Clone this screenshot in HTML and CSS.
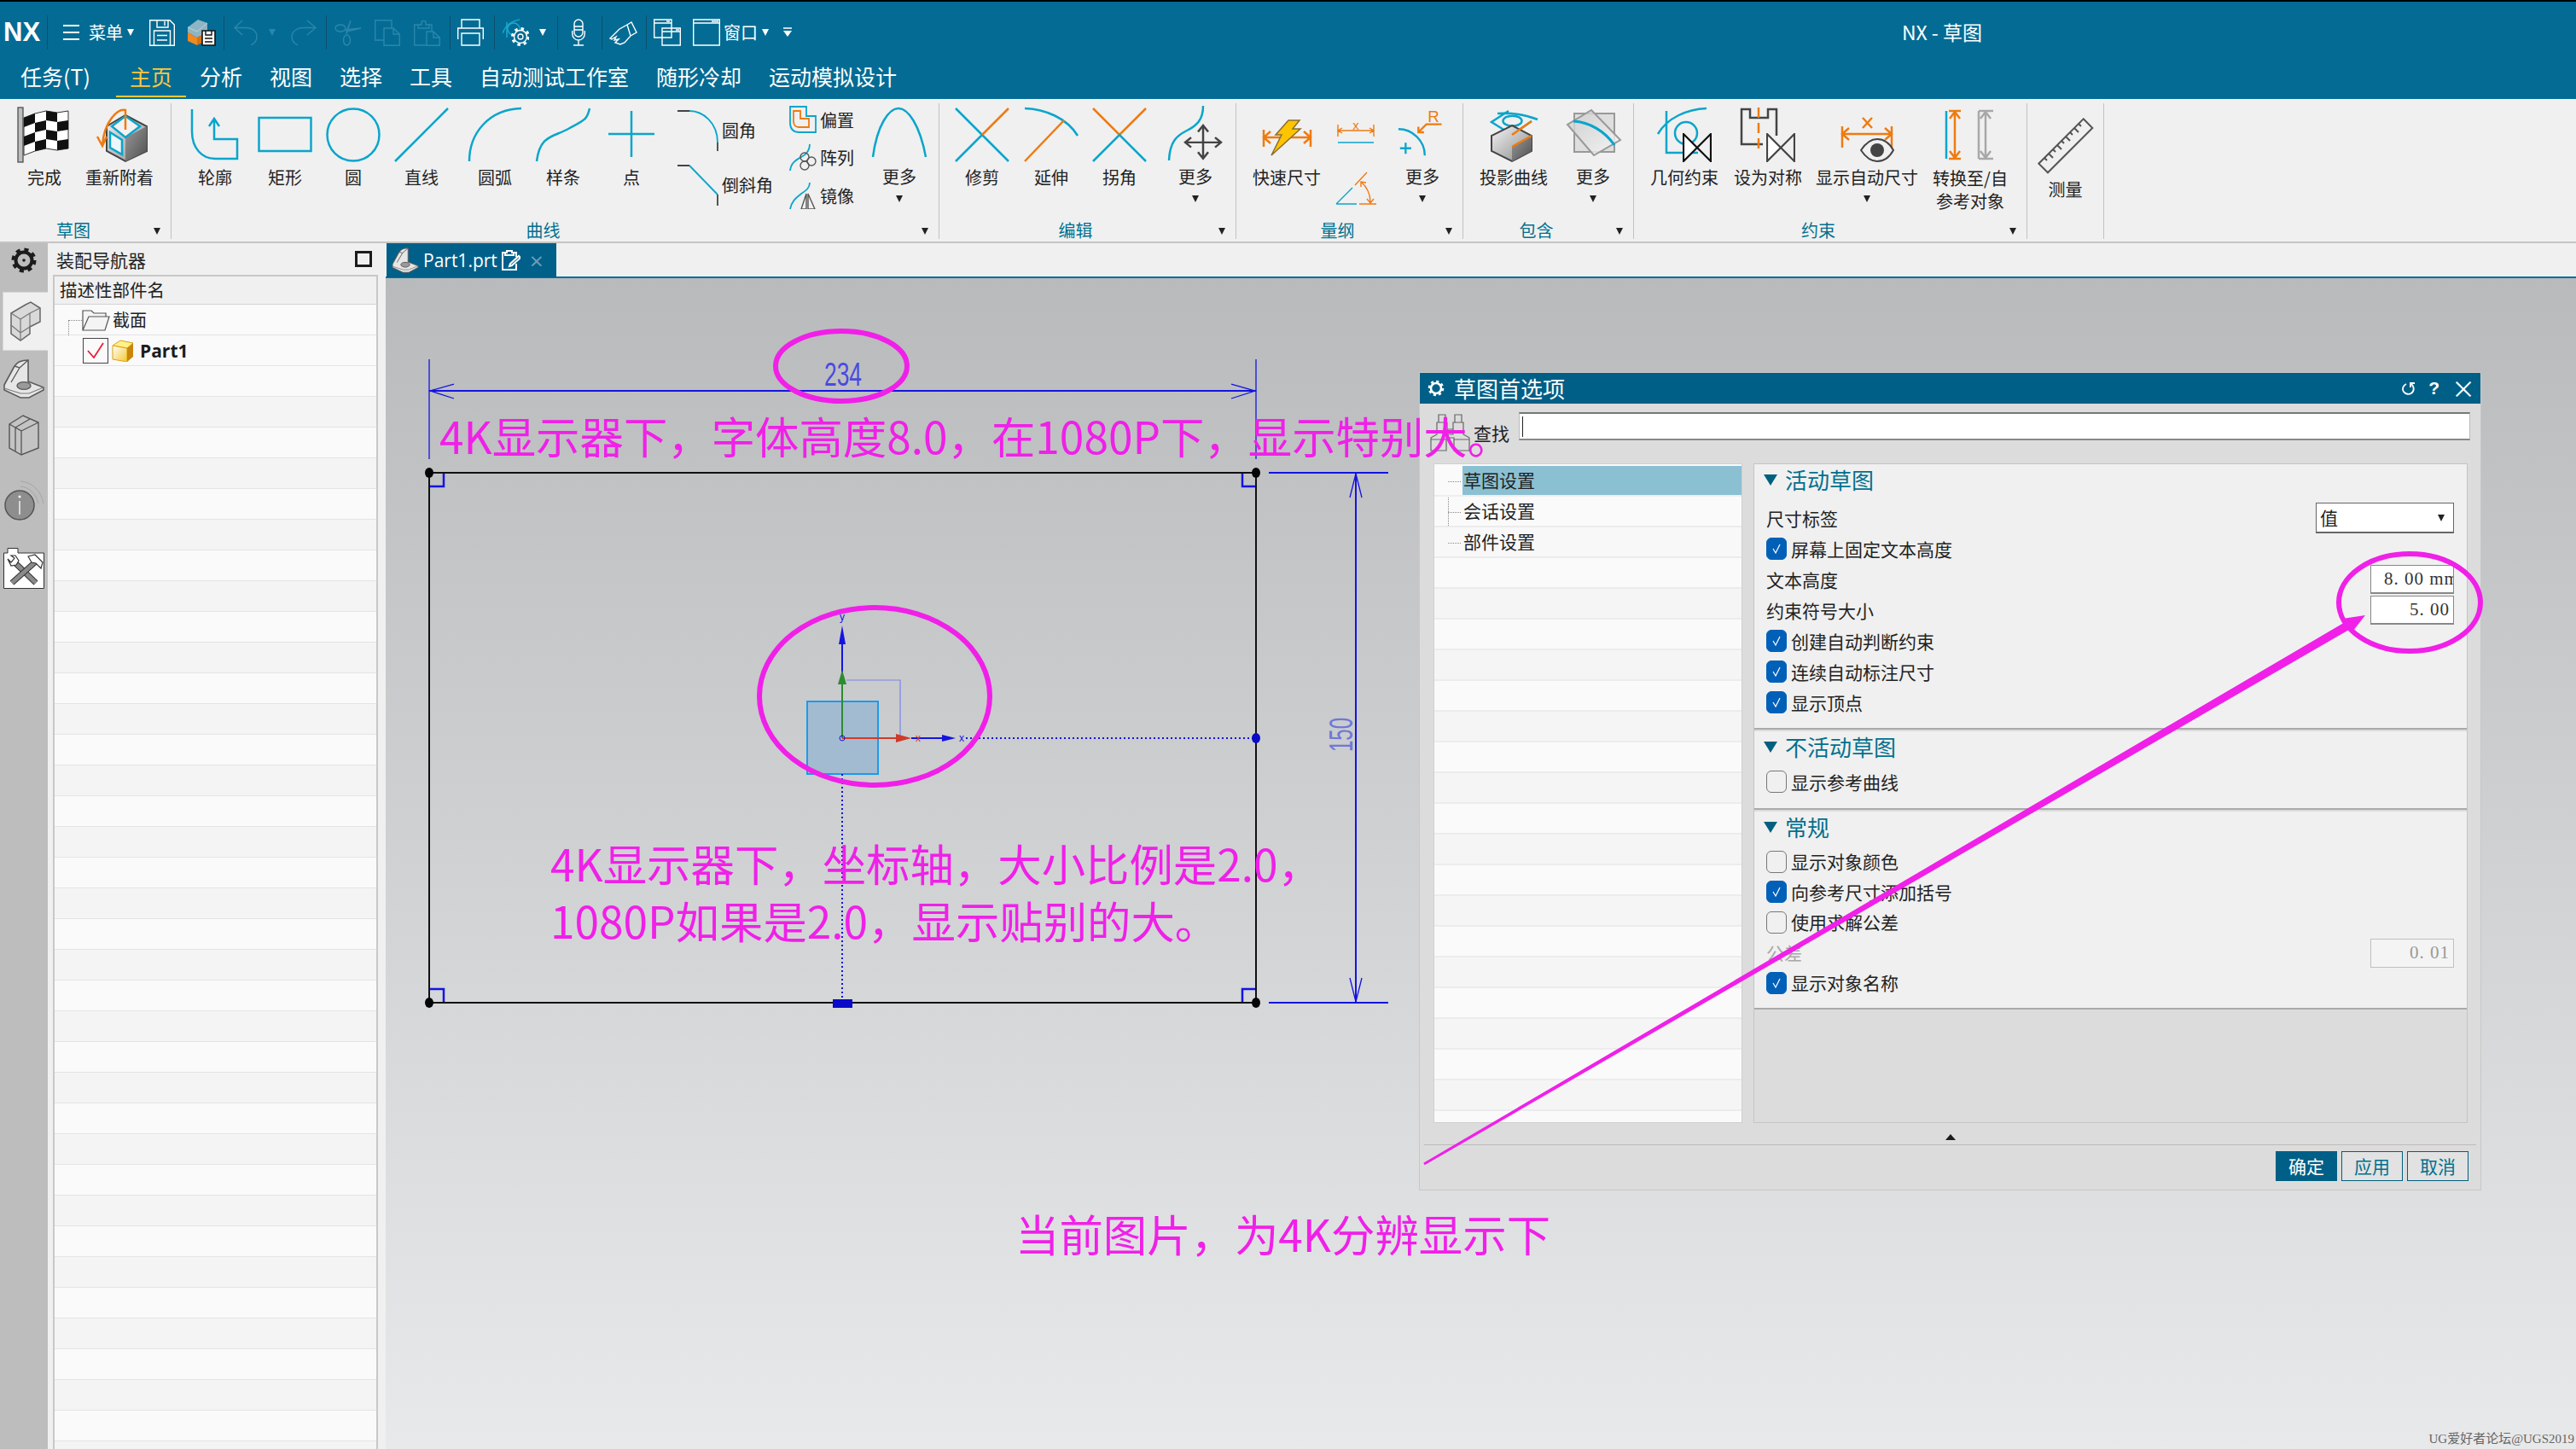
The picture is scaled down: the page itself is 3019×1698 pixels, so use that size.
FILE: index.html
```html
<!DOCTYPE html>
<html lang="zh">
<head>
<meta charset="utf-8">
<title>NX - 草图</title>
<link rel="stylesheet" href="styles.css">
</head>
<body>
<svg class="defs" width="0" height="0">
  <defs>
    <linearGradient id="gCube" x1="0" y1="0" x2="1" y2="1"><stop offset="0" stop-color="#f4f4f4"/><stop offset="1" stop-color="#8a8a8a"/></linearGradient>
    <linearGradient id="gIn" x1="0" y1="0" x2="1" y2="1"><stop offset="0" stop-color="#9a9a9a"/><stop offset="1" stop-color="#4f4f4f"/></linearGradient>
    <linearGradient id="gSurf" x1="0" y1="0" x2="1" y2="1"><stop offset="0" stop-color="#c9c9c9"/><stop offset="1" stop-color="#fafafa"/></linearGradient>
    <symbol id="part" viewBox="0 0 48 46">
      <path d="M1 30L13 8C16 3 23 1 29 1V26L47 33V36L30 45H20L1 36Z" fill="#e6e6e6" stroke="#5c5c5c" stroke-width="1.6"/>
      <path d="M13 8L19 10L29 1M19 10L9 27" fill="none" stroke="#5c5c5c" stroke-width="1.4"/>
      <ellipse cx="24" cy="31" rx="8" ry="4.4" fill="#9a9a9a" stroke="#5c5c5c" stroke-width="1.4"/>
      <path d="M1 34L20 40H30L47 33" fill="none" stroke="#7c7c7c" stroke-width="1.2"/>
    </symbol>
    <symbol id="bowtie" viewBox="0 0 34 34">
      <path d="M1 1L17 17L1 33Z" fill="#fff"/>
      <path d="M1 1V33L33 1V33Z" fill="none" stroke="currentColor" stroke-width="2.2"/>
    </symbol>
  </defs>
</svg>

<div class="app">
  <header class="top">
    <div class="qa">
      <span class="nx">NX</span>
      <i class="qsep"></i>
      <svg class="ml18" width="19" height="20" viewBox="0 0 19 20"><path d="M0 2H19M0 10H19M0 18H19" stroke="#fff" stroke-width="2"/></svg>
      <span class="qtext ml11">菜单</span>
      <i class="wcaret ml5"></i>
      <svg class="qi ml18" width="30" height="31" viewBox="0 0 30 31"><path d="M.7.7H24L29.3 6V30.3H.7Z"/><path d="M9 .7V9H22V.7M18 2V7M5.5 30V13H24.5V30M9 18.5H21M9 24H21"/></svg>
      <svg class="ml15" width="33" height="32" viewBox="0 0 33 32"><path d="M0 10L12 1L23 5V16L11 22L0 16Z" fill="#8fb5c4"/><path d="M0 16L11 22V31L0 26Z" fill="#ee8a1f"/><path d="M11 22L23 16V25L11 31Z" fill="#d9720e"/><path d="M0 10L11 15L23 5" fill="none" stroke="#b9d3dd"/><path d="M17 14H32V31H17Z" fill="#fff" stroke="#111" stroke-width="1.6"/><path d="M21 14V19H28V14M20 23H29M20 27H29" fill="none" stroke="#111" stroke-width="1.4"/></svg>
      <i class="qsep ml9"></i>
      <svg class="qo ml11" width="28" height="30" viewBox="0 0 28 30"><path d="M10 1L1 9.5L10 18M1 9.5H14C22 9.5 27 14 27 20C27 25 24 28 20 30"/></svg>
      <i class="dcaret ml13"></i>
      <svg class="qo ml18" width="30" height="30" viewBox="0 0 30 30"><path d="M19 1L29 9.5L19 18M29 9.5H15C7 9.5 1 14 1 20C1 25 4 28 8 30"/></svg>
      <i class="qsep ml11"></i>
      <svg class="qo ml9" width="32" height="31" viewBox="0 0 32 31"><ellipse cx="7" cy="10" rx="6" ry="4"/><ellipse cx="14.500" cy="24" rx="4" ry="6"/><path d="M12 12L31 10L14 14L19 1L14 17"/></svg>
      <svg class="qo ml15" width="30" height="31" viewBox="0 0 30 31"><path d="M11 24H.7V.7H20V10M11 10H22L29.300 17V30.300H11Z M22 10V17H29"/></svg>
      <svg class="qo ml16" width="31" height="31" viewBox="0 0 31 31"><path d="M15 30H.7V6H9V3C9 1 14 1 14 3V6H21V14M5 6V10H18V6M15 14H23L30.300 21V30.300H15Z M23 14V21H30"/></svg>
      <i class="qsep ml11"></i>
      <svg class="qi ml8" width="31" height="32" viewBox="0 0 31 32"><path d="M5 11V1H26V11M.7 24V11H30.300V24M5 17H26V31H5Z"/></svg>
      <i class="qsep ml12"></i>
      <svg class="ml9" width="31" height="32" viewBox="0 0 31 32"><path d="M0 17C3 8 9 3 20 1" fill="none" stroke="#19a9d2" stroke-width="1.500"/><path d="M5 4V22" fill="none" stroke="#19a9d2" stroke-width="1.500"/><circle cx="13" cy="12" r="7" fill="none" stroke="#19a9d2" stroke-width="1.500"/><circle cx="21" cy="21" r="7.500" fill="#046c94" stroke="#fff" stroke-width="1.400"/><circle cx="21" cy="21" r="9.500" fill="none" stroke="#fff" stroke-width="3" stroke-dasharray="3.500 4"/><circle cx="21" cy="21" r="3" fill="none" stroke="#fff" stroke-width="1.300"/></svg>
      <i class="wcaret ml12"></i>
      <i class="qsep ml13"></i>
      <svg class="qi ml16" width="16" height="32" viewBox="0 0 16 32"><rect x="3" y="1" width="10" height="20" rx="5"/><path d="M3 9H13M3 13H13M.7 14V17C.7 22 4 25 8 25C12 25 15.300 22 15.300 17V14M8 25V31M2 31H14"/></svg>
      <i class="qsep ml19"></i>
      <svg class="qi ml8" width="33" height="30" viewBox="0 0 33 30"><path d="M1 22L12 11L21 6L26 3L32 15L25 19L18 27L13 29L7 27L11 23L6 24L8 20L3 23ZM26 3L21 6L25 19"/></svg>
      <i class="qsep ml10"></i>
      <svg class="qi ml8" width="32" height="32" viewBox="0 0 32 32"><path d="M.7 1H21V22H.7ZM.7 5H21M10 11H31.300V31H10ZM10 15H31.300M15 3H19M26 13H30"/></svg>
      <svg class="qi ml14" width="32" height="32" viewBox="0 0 32 32"><path d="M.7 1H31.300V31H.7ZM.7 5H31.300M22 3H30"/></svg>
      <span class="qtext ml4">窗口</span>
      <i class="wcaret ml5"></i>
      <svg class="ml17" width="10" height="12" viewBox="0 0 10 12"><path d="M0 1H10" stroke="#fff" stroke-width="1.500"/><path d="M0 4H10L5 11Z" fill="#fff"/></svg>
      <span class="apptitle">NX - 草图</span>
    </div>
    <nav class="menu">
      <span class="mi first">任务(T)</span>
      <span class="mi on">主页</span>
      <span class="mi">分析</span>
      <span class="mi">视图</span>
      <span class="mi">选择</span>
      <span class="mi">工具</span>
      <span class="mi">自动测试工作室</span>
      <span class="mi">随形冷却</span>
      <span class="mi">运动模拟设计</span>
    </nav>
  </header>

  <section class="ribbon">
    <div class="grp g1">
      <div class="tools">
        <div class="tool w88">
          <svg class="ico" viewBox="0 0 64 64"><rect x="1" y="0" width="6" height="64" fill="#bdbdbd" stroke="#444" stroke-width="1.200"/><polygon points="8,12 21,7 34,4 47,6 60,4 60,48 47,50 34,48 21,51 8,56" fill="#fff" stroke="#333"/><g fill="#111"><polygon points="8,12 21,7 21,18 8,23"/><polygon points="34,4 47,6 47,17 34,15"/><polygon points="21,18 34,15 34,26 21,29"/><polygon points="47,17 60,15 60,26 47,28"/><polygon points="8,34 21,29 21,40 8,45"/><polygon points="34,26 47,28 47,39 34,37"/><polygon points="21,40 34,37 34,48 21,51"/><polygon points="47,39 60,37 60,48 47,50"/></g></svg>
          <span class="lbl">完成</span>
        </div>
        <div class="tool w88">
          <svg class="ico" viewBox="0 0 64 64"><polygon points="39,9 64,22 64,51 39,63 17,51 17,22" fill="url(#gCube)" stroke="#444" stroke-width="2"/><polygon points="39,63 64,51 64,22 39,35" fill="url(#gIn)"/><polygon points="39,10 56,22 39,35 23,22" fill="#f2f2f2" stroke="#0aa5cc" stroke-width="2.500"/><polygon points="21,29 35,38 35,55 21,47" fill="#eef6f8" stroke="#0aa5cc" stroke-width="2.500"/><path class="o" d="M39 26V3C30 1 14 16 12 44M6 34L12 45L17 34"/></svg>
          <span class="lbl">重新附着</span>
        </div>
      </div>
      <div class="glabel">草图<i class="dcaret gc"></i></div>
    </div>

    <div class="grp g2">
      <div class="tools">
        <div class="tool w82"><svg class="ico" viewBox="0 0 64 64"><path class="b" d="M5 2V28C5 48 17 60 32 60H58V37H31V14M25 22L31 13L37 22"/></svg><span class="lbl">轮廓</span></div>
        <div class="tool w82"><svg class="ico" viewBox="0 0 64 64"><rect class="b" x="1.500" y="12" width="61" height="39"/></svg><span class="lbl">矩形</span></div>
        <div class="tool w78"><svg class="ico" viewBox="0 0 64 64"><circle class="b" cx="32" cy="32" r="30.500"/></svg><span class="lbl">圆</span></div>
        <div class="tool w82"><svg class="ico" viewBox="0 0 64 64"><path class="b" d="M1 63L63 1"/></svg><span class="lbl">直线</span></div>
        <div class="tool w90"><svg class="ico" viewBox="0 0 64 64"><path class="b" d="M2 63C2 30 25 2 63 1"/></svg><span class="lbl">圆弧</span></div>
        <div class="tool w70"><svg class="ico" viewBox="0 0 64 64"><path class="b" d="M1 63C5 32 20 35 38 25S60 15 63 1"/></svg><span class="lbl">样条</span></div>
        <div class="tool w90"><svg class="ico" viewBox="0 0 64 64"><path class="b" d="M5 31H59M32 4V58"/></svg><span class="lbl">点</span></div>
        <div class="stack s1">
          <div class="srow r66"><svg class="i48" viewBox="0 0 48 48"><path class="b thin" d="M14 1C30 1 47 15 47 38"/><path class="d thin" d="M0 1H14M47 38V48"/></svg><span class="lbl ml4">圆角</span></div>
          <div class="srow r66"><svg class="i48" viewBox="0 0 48 48"><path class="b thin" d="M14 1L47 35"/><path class="d thin" d="M0 1H14M47 35V48"/></svg><span class="lbl ml4">倒斜角</span></div>
        </div>
        <div class="stack s2">
          <div class="srow r45"><svg class="i32" viewBox="0 0 32 32"><path class="b thin" d="M1 1H20V12H31V31H12C5 31 1 27 1 20Z"/><path class="o thin" d="M5 6H13V15H23V25H11C7 25 5 22 5 18Z"/></svg><span class="lbl ml4">偏置</span></div>
          <div class="srow r45"><svg class="i32" viewBox="0 0 32 32"><path class="b thin" d="M1 32C2 22 9 19 14 16C20 13 24 8 24 1"/><g class="d thinner"><circle cx="18" cy="16" r="5"/><circle cx="18" cy="26" r="5"/><circle cx="26" cy="21" r="5"/></g></svg><span class="lbl ml4">阵列</span></div>
          <div class="srow r45"><svg class="i32" viewBox="0 0 32 32"><path class="b thin" d="M1 32C3 22 9 18 14 14C20 10 24 7 24 1"/><path class="d thinner" d="M14 32L20 14V32ZM22 14L30 32H22Z"/></svg><span class="lbl ml4">镜像</span></div>
        </div>
        <div class="tool w68 more"><svg class="ico short" viewBox="0 0 64 58"><path class="b" d="M1 58C6 20 20 1 31 1S56 20 63 58"/></svg><span class="lbl">更多</span><i class="dcaret mc"></i></div>
      </div>
      <div class="glabel">曲线<i class="dcaret gc"></i></div>
    </div>

    <div class="grp g3">
      <div class="tools">
        <div class="tool w80"><svg class="ico" viewBox="0 0 64 64"><path class="b" d="M1 1L63 63M32 32L1 63"/><path class="o" d="M63 1L32 32"/></svg><span class="lbl">修剪</span></div>
        <div class="tool w82"><svg class="ico" viewBox="0 0 64 64"><path class="b" d="M1 1C25 2 50 12 63 33"/><path class="o" d="M47 15L1 63"/></svg><span class="lbl">延伸</span></div>
        <div class="tool w78"><svg class="ico" viewBox="0 0 64 64"><path class="o" d="M1 1L32 32L63 1"/><path class="b" d="M1 63L32 32L63 63"/></svg><span class="lbl">拐角</span></div>
        <div class="tool w92 ml4 more"><svg class="ico short" viewBox="0 0 64 58"><path class="b" d="M1 62C2 40 10 33 22 27C34 21 41 14 41 -2"/><path class="d" d="M23 43H65M44 23V62M38 30L44 22L50 30M38 55L44 63L50 55M30 37L23 43L30 49M58 37L65 43L58 49" transform="translate(-3 0) scale(1 .95)"/></svg><span class="lbl">更多</span><i class="dcaret mc"></i></div>
      </div>
      <div class="glabel">编辑<i class="dcaret gc"></i></div>
    </div>

    <div class="grp g4">
      <div class="tools">
        <div class="tool w98"><svg class="ico" viewBox="0 0 64 64"><path class="o" d="M5 26V46M60 26V46M5 35H60M13 28L5 35L13 42M52 28L60 35L52 42"/><polygon points="34,15 47,15 39,25 48,25 14,56 26,32 19,32" fill="#ffc400" stroke="#8a6d2f" stroke-width="1.500"/></svg><span class="lbl">快速尺寸</span></div>
        <div class="stack s3">
          <svg class="i48w" viewBox="0 0 48 26"><path class="o thinner" d="M3 2V16M45 2V16M3 9H45M8 6L3 9L8 12M40 6L45 9L40 12"/><text class="svgx" x="24" y="8" text-anchor="middle">x</text><path class="b thinner" d="M3 23H45"/></svg>
          <svg class="i48a" viewBox="0 0 48 40"><path class="b thinner" d="M1 38L20 19M1 38H25"/><path class="o thinner" d="M23 16L37 1M28 38H48M30 12C37 18 41 26 41 36M30 18L30 12L36 13M37 32L41 37L45 32"/></svg>
        </div>
        <div class="tool w92 more"><svg class="ico short" viewBox="0 0 64 62"><path class="b" d="M2 27C20 27 35 42 35 60M4 51H18M11 44V58"/><path class="o" d="M56 21H37L27 31M27 24V31H34"/><text class="svgr" x="46" y="18" text-anchor="middle">R</text></svg><span class="lbl">更多</span><i class="dcaret mc"></i></div>
      </div>
      <div class="glabel">量纲<i class="dcaret gc"></i></div>
    </div>

    <div class="grp g5">
      <div class="tools">
        <div class="tool w118"><svg class="ico" viewBox="0 0 64 64"><path class="b" d="M13 7C30 6 48 9 60 14M53 16L30 32L6 17L26 4"/><ellipse class="b" cx="30.500" cy="15.700" rx="11" ry="6"/><polygon points="30,21 53,33 53,51 30,63 6,51 6,33" fill="url(#gCube)" stroke="#444" stroke-width="2"/><polygon points="30,46 53,33 53,51 30,63" fill="url(#gIn)"/><path class="o" d="M30 46L53 33M30 32L53 16"/></svg><span class="lbl">投影曲线</span></div>
        <div class="tool w68 more"><svg class="ico short" viewBox="0 0 64 58"><polygon points="10,7 57,7 57,52 10,52" fill="#dedede" stroke="#999" stroke-width="2"/><polygon points="30,3 64,38 33,56 2,20" fill="url(#gSurf)" fill-opacity=".8" stroke="#999" stroke-width="2"/><path d="M9 16C28 17 46 28 57 44" fill="none" stroke="#0aa5cc" stroke-width="3"/></svg><span class="lbl">更多</span><i class="dcaret mc"></i></div>
      </div>
      <div class="glabel">包含<i class="dcaret gc"></i></div>
    </div>

    <div class="grp g6">
      <div class="tools">
        <div class="tool w118"><svg class="ico blk" viewBox="0 0 64 64"><path class="b" d="M1 31C12 12 35 2 58 1M11 4V53H48"/><circle class="b" cx="34" cy="30" r="13"/><use href="#bowtie" x="30" y="30" width="34" height="34"/></svg><span class="lbl">几何约束</span></div>
        <div class="tool w78"><svg class="ico gry" viewBox="0 0 64 64"><path class="d" d="M42 33V2H32V12H11V2H1V43H26"/><path class="o dash" d="M21 0V50"/><use href="#bowtie" x="30" y="30" width="34" height="34"/></svg><span class="lbl">设为对称</span></div>
        <div class="tool w154 more2"><svg class="ico" viewBox="0 0 64 64"><path class="o" d="M3 22V47M61 22V47M3 31H61M11 24L3 31L11 38M53 24L61 31L53 38M27 12L38 24M38 12L27 24"/><path d="M25 50C31 41 37 37 44 37C51 37 58 41 63 50C58 59 51 63 44 63C37 63 31 59 25 50Z" fill="#f0f0f0" stroke="#444" stroke-width="2"/><circle cx="44" cy="50" r="8" fill="#444"/></svg><span class="lbl">显示自动尺寸</span><i class="dcaret mc2"></i></div>
        <div class="tool w88"><svg class="ico" viewBox="0 0 64 64"><path class="b" d="M4 4V60"/><path class="o" d="M7 4H21M7 60H21M14 4V60M8 13L14 5L20 13M8 51L14 59L20 51"/><path class="g" d="M42 4V60M42 4H59M42 60H59M50 4V60M44 13L50 5L56 13M44 51L50 59L56 51"/></svg><span class="lbl two">转换至/自<br>参考对象</span></div>
      </div>
      <div class="glabel">约束<i class="dcaret gc"></i></div>
    </div>

    <div class="grp g7">
      <div class="tools">
        <div class="tool wfull"><svg class="ruler" viewBox="0 0 66 78"><path d="M53.700 13.300L64.300 24L12 76.300L1.300 65.700Z" fill="none" stroke="#555" stroke-width="2"/><path d="M48 19L51 22M43 24L48 29M38 29L41 32M33 34L38 39M28 39L31 42M23 44L28 49M18 49L21 52M13 54L18 59M8 59L11 62" stroke="#555" stroke-width="2"/></svg><span class="lbl">测量</span></div>
      </div>
    </div>
  </section>

  <main class="work">
    <aside class="strip">
      <div class="st st-gear"><svg width="30" height="30" viewBox="0 0 30 30"><circle cx="15" cy="15" r="9.500" fill="none" stroke="#1c1c1c" stroke-width="4"/><circle cx="15" cy="15" r="12.500" fill="none" stroke="#1c1c1c" stroke-width="4" stroke-dasharray="5 4.820"/><circle cx="15" cy="15" r="1.800" fill="#1c1c1c"/></svg></div>
      <div class="st st-active"><svg width="38" height="48" viewBox="0 0 38 48"><path d="M2 14L19 4L25 1L36 8V24L24 30V38L13 46L2 38Z" fill="#d9d9d9" stroke="#666" stroke-width="1.500"/><path d="M2 14L13 21L24 14L36 8M13 21V46M24 14V30M24 30L13 37L2 28" fill="none" stroke="#777" stroke-width="1.200"/></svg></div>
      <div class="st st-part"><svg width="48" height="46"><use href="#part" width="48" height="46"/></svg></div>
      <div class="st st-book"><svg width="36" height="48" viewBox="0 0 36 48"><path d="M1 11L17 1L35 9V39L15 47L1 39Z" fill="#c4c4c4" stroke="#555" stroke-width="1.400"/><path d="M1 11L15 19V47M15 19L35 9M8 15V43M8 15L25 5" fill="none" stroke="#555" stroke-width="1.300"/></svg></div>
      <div class="st st-info"><svg width="48" height="48" viewBox="0 0 48 48"><circle cx="19" cy="30" r="17" fill="#8e8e8e" stroke="#555" stroke-width="1.500"/><circle cx="19" cy="20" r="1.500" fill="#fff"/><path d="M19 25V41" stroke="#fff" stroke-width="1.300"/><path d="M20 2C34 3 44 13 47 28M20 8C30 9 38 16 41 28" fill="none" stroke="#a5a5a5" stroke-width="1"/></svg></div>
      <div class="st st-tools"><svg width="48" height="48" viewBox="0 0 48 48"><path d="M.5 6H5V.5H17V6H47.500V47.500H.5Z" fill="#fff" stroke="#333"/><path d="M12 16L38 41" stroke="#333" stroke-width="7"/><path d="M12 16L38 41" stroke="#8a8a8a" stroke-width="5"/><path d="M38 16L10 41" stroke="#333" stroke-width="7"/><path d="M38 16L10 41" stroke="#8a8a8a" stroke-width="5"/><path d="M5 13L9 17L13 12L9 9L14 9L18 15L15 20L9 21Z" fill="#fff" stroke="#333" stroke-width="1.200"/><path d="M29 10L37 8L46 17L44 24L38 18L33 17Z" fill="#fff" stroke="#333" stroke-width="1.200"/></svg></div>
    </aside>

    <aside class="nav">
      <div class="nav-head"><span>装配导航器</span><i class="maxbtn"></i></div>
      <div class="table">
        <div class="thead">描述性部件名</div>
        <div class="trow tree1">
          <svg width="33" height="26" viewBox="0 0 33 26"><path d="M1 25V2H11L14 5H28V9H32L27 25ZM1 25L8 9H28" fill="#f4f4f4" stroke="#555" stroke-width="1.200"/></svg>
          <span class="tn">截面</span>
        </div>
        <div class="trow tree2">
          <span class="chk"><svg width="22" height="22" viewBox="0 0 22 22"><path d="M2 11L9 19L20 2" fill="none" stroke="#ee1c3c" stroke-width="1.800"/></svg></span>
          <svg class="cube" width="26" height="26" viewBox="0 0 26 26"><defs><linearGradient id="gYel" x1="0" y1="0" x2="1" y2="1"><stop offset="0" stop-color="#fff"/><stop offset="1" stop-color="#f2c92f"/></linearGradient></defs><path d="M1 7L10 1L25 4L18 10Z" fill="#fff28a" stroke="#e0a010"/><path d="M1 7L18 10V26L1 23Z" fill="url(#gYel)" stroke="#e0a010"/><path d="M18 10L25 4V20L18 26Z" fill="#c9860b"/></svg>
          <b class="pn">Part1</b>
        </div>
        <div class="tfill"></div>
      </div>
    </aside>

    <div class="stage">
      <div class="tabbar">
        <div class="tab">
          <svg width="32" height="30"><use href="#part" width="32" height="30"/></svg>
          <span>Part1.prt</span>
          <svg width="22" height="24" viewBox="0 0 22 24"><path d="M14 3H17V8M4 3H1V23H17V16M4 3H6V1H12V3H14V6H4Z M10 16L20 7L22 9L12 18L9 19Z" fill="none" stroke="#fff" stroke-width="2"/></svg>
          <span class="tabx">×</span>
        </div>
      </div>
      <div class="canvas">
        <svg class="sketch" viewBox="452 326 2567 1372">
          <g class="dim">
            <path d="M503 421V538M1472 421V538"/>
            <path class="dimw" d="M503 458H1472"/>
            <path d="M532 450L504 458L532 467M1443 450L1471 458L1443 467"/>
            <path class="dimw" d="M1487 554H1627M1487 1175H1627"/>
            <path class="dimw" d="M1589 554V1175"/>
            <path d="M1582 583L1589 555L1596 583M1582 1146L1589 1174L1596 1146"/>
          </g>
          <text class="dt" x="988" y="452" text-anchor="middle" textLength="44" lengthAdjust="spacingAndGlyphs">234</text>
          <text class="dt dtv" x="0" y="0" transform="translate(1585 861) rotate(-90)" text-anchor="middle" textLength="40" lengthAdjust="spacingAndGlyphs">150</text>

          <rect class="csys" x="946" y="822" width="83" height="85"/>
          <path class="link" d="M992 797H1055V865"/>
          <path class="ax-b" d="M987 865V740M1068 865H1112"/>
          <polygon points="987,733 983,755 991,755" fill="#1414e0"/>
          <polygon points="1120,865 1104,861 1104,869" fill="#1414e0"/>
          <path class="ax-g" d="M987 865V795"/>
          <polygon points="987,785 982,802 992,802" fill="#2e8b2e"/>
          <path class="ax-r" d="M987 865H1055"/>
          <polygon points="1068,865 1050,860 1050,870" fill="#d03a2a"/>
          <text class="axl" x="987" y="727" text-anchor="middle">y</text>
          <text class="axl" x="1127" y="869" text-anchor="middle">x</text>
          <text class="axl red" x="1076" y="869" text-anchor="middle">x</text>
          <circle cx="987" cy="865" r="3" fill="none" stroke="#1414e0"/>
          <path class="dots" d="M1132 865H1472M987 907V1171"/>

          <path class="corner" d="M520 555V570H504M1456 555V570H1471M520 1174V1159H504M1456 1174V1159H1471"/>
          <rect class="sk" x="503" y="554" width="969" height="621"/>
          <g class="pts">
            <ellipse cx="503" cy="554" rx="5" ry="6"/><ellipse cx="1472" cy="554" rx="5" ry="6"/>
            <ellipse cx="503" cy="1175" rx="5" ry="6"/><ellipse cx="1472" cy="1175" rx="5" ry="6"/>
          </g>
          <ellipse cx="1472" cy="865" rx="5" ry="6" fill="#0a0ac8"/>
          <rect x="976" y="1171" width="23" height="10" fill="#0a0ac8"/>
        </svg>

        <section class="dialog">
          <div class="dlg-title">
            <svg width="20" height="20" viewBox="0 0 20 20"><circle cx="10" cy="10" r="6" fill="none" stroke="#fff" stroke-width="2.500"/><circle cx="10" cy="10" r="7.800" fill="none" stroke="#fff" stroke-width="3" stroke-dasharray="3 3.120"/></svg>
            <span class="dlg-name">草图首选项</span>
            <svg class="dlg-reset" width="18" height="18" viewBox="0 0 18 18"><path d="M6 4C2 6 1 10 3 13C5 16 10 17 13 14C16 11 15 6 11 3M11 8V3H16" fill="none" stroke="#fff" stroke-width="1.800"/></svg>
            <span class="dlg-help">?</span>
            <span class="dlg-close">×</span>
          </div>
          <div class="find">
            <svg width="47" height="44" viewBox="0 0 47 44"><path d="M10 1H18V10H10ZM29 1H37V10H29ZM8 10H20V24H27V10H39V24L46 28V43H28V28H19V43H1V28L8 24ZM1 30H19M28 30H46M20 18H27" fill="none" stroke="#666" stroke-width="1.200"/></svg>
            <span class="find-l">查找</span>
            <div class="find-input"><i></i></div>
          </div>
          <div class="dlg-body">
            <div class="dlist">
              <div class="ditem sel"><span>草图设置</span></div>
              <div class="ditem"><span>会话设置</span></div>
              <div class="ditem alt"><span>部件设置</span></div>
              <div class="dfill"></div>
            </div>
            <div class="dpanel">
              <div class="sect s-a">
                <div class="shead"><i class="tri"></i>活动草图</div>
                <div class="frow"><span>尺寸标签</span><div class="select"><span>值</span><i class="dcaret"></i></div></div>
                <div class="frow"><i class="cb on"><svg width="12" height="14" viewBox="0 0 12 14"><path d="M2 7L5 12L10 2" fill="none" stroke="#fff" stroke-width="1.200"/></svg></i><span>屏幕上固定文本高度</span></div>
                <div class="frow"><span>文本高度</span><div class="field fleft">8. 00 mm</div></div>
                <div class="frow"><span>约束符号大小</span><div class="field">5. 00</div></div>
                <div class="frow"><i class="cb on"><svg width="12" height="14" viewBox="0 0 12 14"><path d="M2 7L5 12L10 2" fill="none" stroke="#fff" stroke-width="1.200"/></svg></i><span>创建自动判断约束</span></div>
                <div class="frow"><i class="cb on"><svg width="12" height="14" viewBox="0 0 12 14"><path d="M2 7L5 12L10 2" fill="none" stroke="#fff" stroke-width="1.200"/></svg></i><span>连续自动标注尺寸</span></div>
                <div class="frow"><i class="cb on"><svg width="12" height="14" viewBox="0 0 12 14"><path d="M2 7L5 12L10 2" fill="none" stroke="#fff" stroke-width="1.200"/></svg></i><span>显示顶点</span></div>
              </div>
              <div class="sect s-b">
                <div class="shead"><i class="tri"></i>不活动草图</div>
                <div class="frow mt5"><i class="cb"></i><span>显示参考曲线</span></div>
              </div>
              <div class="sect s-c">
                <div class="shead"><i class="tri"></i>常规</div>
                <div class="frow mt5"><i class="cb"></i><span>显示对象颜色</span></div>
                <div class="frow"><i class="cb on"><svg width="12" height="14" viewBox="0 0 12 14"><path d="M2 7L5 12L10 2" fill="none" stroke="#fff" stroke-width="1.200"/></svg></i><span>向参考尺寸添加括号</span></div>
                <div class="frow"><i class="cb"></i><span>使用求解公差</span></div>
                <div class="frow off"><span>公差</span><div class="field dis">0. 01</div></div>
                <div class="frow"><i class="cb on"><svg width="12" height="14" viewBox="0 0 12 14"><path d="M2 7L5 12L10 2" fill="none" stroke="#fff" stroke-width="1.200"/></svg></i><span>显示对象名称</span></div>
              </div>
            </div>
          </div>
          <div class="collapse"><i></i></div>
          <div class="dlg-foot">
            <button class="btn pri">确定</button>
            <button class="btn">应用</button>
            <button class="btn">取消</button>
          </div>
        </section>
      </div>
    </div>
  </main>

  <svg class="notes" viewBox="0 0 3019 1698">
    <ellipse cx="986" cy="429" rx="77" ry="41"/>
    <ellipse cx="1025" cy="816" rx="135" ry="104"/>
    <ellipse cx="2824" cy="706" rx="83" ry="57"/>
    <polygon class="arrow" points="1668.300,1362.700 2747.900,729.300 2745.400,725 2772,721 2755.400,742.200 2752.900,737.900 1669.700,1365.300"/>
    <text x="515" y="532">4K显示器下，字体高度8.0，在1080P下，显示特别大。</text>
    <text x="645" y="1033">4K显示器下，坐标轴，大小比例是2.0，</text>
    <text x="645" y="1100">1080P如果是2.0，显示贴别的大。</text>
    <text x="1190" y="1467">当前图片，为4K分辨显示下</text>
  </svg>
  <div class="mark">UG爱好者论坛@UGS2019</div>
</div>
</body>
</html>
```

FILE: styles.css
```css
* { box-sizing: border-box; }
html, body { margin: 0; padding: 0; width: 3019px; height: 1698px; overflow: hidden; background: #bdbdbd; }
body { font-family: "Noto Sans CJK SC", "Noto Sans", sans-serif; color: #222; }
i { display: block; font-style: normal; }
svg { display: block; flex: none; }
.defs { position: absolute; }

.app { position: relative; width: 3019px; height: 1698px; display: flex; flex-direction: column; }

/* top */
.top { height: 116px; flex: none; background: #046c94; border-top: 2px solid #000; color: #fff; }
.qa { height: 72px; display: flex; align-items: center; }
.nx { width: 55px; padding-left: 4px; font: bold 31px "Liberation Sans", sans-serif; }
.qsep { width: 1px; height: 40px; background: #0a4f6e; }
.qtext { font-size: 20px; line-height: 1; }
.qi path, .qi rect { fill: none; stroke: #fff; stroke-width: 1.4; }
.qo path, .qo ellipse { fill: none; stroke: #2b86aa; stroke-width: 1.4; }
.wcaret { width: 0; height: 0; border-left: 4.5px solid transparent; border-right: 4.5px solid transparent; border-top: 8px solid #fff; }
.dcaret { width: 0; height: 0; border-left: 4.5px solid transparent; border-right: 4.5px solid transparent; border-top: 8px solid #222; }
.qa .dcaret { border-top-color: #2b86aa; }
.apptitle { margin-left: auto; margin-right: 696px; font-size: 23px; margin-top: -2px; }
.ml4 { margin-left: 4px; } .ml5 { margin-left: 5px; } .ml8 { margin-left: 8px; } .ml9 { margin-left: 9px; }
.ml10 { margin-left: 10px; } .ml11 { margin-left: 11px; } .ml12 { margin-left: 12px; } .ml13 { margin-left: 13px; }
.ml14 { margin-left: 14px; } .ml15 { margin-left: 15px; } .ml16 { margin-left: 16px; } .ml17 { margin-left: 17px; }
.ml18 { margin-left: 18px; } .ml19 { margin-left: 19px; }

.menu { height: 42px; padding-left: 8px; display: flex; }
.mi { padding: 0 16px; height: 40px; line-height: 30px; font-size: 25px; white-space: nowrap; }
.mi.first { margin-right: 14px; }
.mi.on { color: #ffc83d; border-bottom: 2px solid #ffc83d; width: 82px; padding: 0 16px; }

/* ribbon */
.ribbon { height: 169px; flex: none; background: #f0f0f0; border-bottom: 2px solid #c4c4c4; display: flex; padding-top: 5px; }
.grp { position: relative; height: 159px; display: flex; flex-direction: column; justify-content: space-between; border-right: 1px solid #c2c2c2; }
.g1 { width: 201px; padding-left: 8px; }
.g2 { width: 900px; padding-left: 10px; }
.g3 { width: 348px; padding-left: 10px; }
.g4 { width: 266px; padding-left: 10px; }
.g5 { width: 200px; }
.g6 { width: 461px; }
.g7 { width: 90px; }
.tools { display: flex; padding-top: 5px; flex: 1; min-height: 0; }
.tool { display: flex; flex-direction: column; align-items: center; flex: none; }
.ico { width: 64px; height: 64px; overflow: visible; }
.ico.short { height: 58px; overflow: visible; }
.lbl { font-size: 20px; line-height: 26px; white-space: nowrap; color: #222; }
.ico + .lbl { margin-top: 5px; }
.more .ico + .lbl { margin-top: 10px; }
.ruler + .lbl { margin-top: 5px; }
.lbl.two { line-height: 27px; text-align: center; }
.mc { margin-top: 9px; }
.mc2 { margin-top: 8px; }
.w68 { width: 68px; } .w70 { width: 70px; } .w78 { width: 78px; } .w80 { width: 80px; } .w82 { width: 82px; }
.w88 { width: 88px; } .w90 { width: 90px; } .w92 { width: 92px; } .w98 { width: 98px; } .w118 { width: 118px; } .w154 { width: 154px; }
.wfull { width: 100%; }
.ruler { width: 66px; height: 78px; }
.stack { display: flex; flex-direction: column; flex: none; }
.s1 { width: 131px; margin-left: 9px; padding-top: 3px; }
.s2 { width: 95px; margin-top: -2px; }
.s3 { width: 64px; padding-top: 18px; align-items: center; }
.srow { display: flex; align-items: center; }
.r66 { height: 66px; align-items: flex-start; }
.r66 .lbl { margin-top: 11px; }
.r45 { height: 45px; align-items: flex-start; }
.r45 .lbl { margin-top: 4px; }
.i48 { width: 48px; height: 48px; }
.i32 { width: 32px; height: 32px; }
.i48w { width: 48px; height: 26px; }
.i48a { width: 48px; height: 40px; margin-top: 31px; }
.b, .o, .d, .g { fill: none; stroke-width: 2.5; }
.b { stroke: #0aa5cc; }
.o { stroke: #ee7b10; }
.d { stroke: #444; }
.g { stroke: #a8a8a8; }
.thin { stroke-width: 1.8; }
.thinner, .thinner circle { stroke-width: 1.4; fill: none; }
.d.thinner, .d.thinner circle { stroke: #555; }
.dash { stroke-dasharray: 12 6; }
.blk { color: #111; }
.gry { color: #444; }
.svgx { font: 15px "Liberation Sans", sans-serif; fill: #ee7b10; }
.svgr { font: 20px "Liberation Sans", sans-serif; fill: #ee7b10; }
.glabel { position: relative; height: 26px; flex: none; margin-bottom: -3px; padding-right: 28px; text-align: center; font-size: 20px; line-height: 26px; color: #00708f; }
.g1 .glabel { margin-left: -8px; }
.g2 .glabel, .g3 .glabel, .g4 .glabel { margin-left: -10px; }
.gc { position: absolute; right: 12px; top: 10px; }

/* workspace */
.work { flex: 1; min-height: 0; display: flex; }
.strip { width: 56px; flex: none; background: #bdbdbd; display: flex; flex-direction: column; }
.st { display: flex; justify-content: center; align-items: center; }
.st-gear { height: 57px; align-items: flex-start; padding-top: 5px; }
.st-active { height: 69px; margin-left: 3px; background: #f0f0f0; border: 1px solid #d8d8d8; border-right: 0; }
.st-part { height: 66px; }
.st-book { height: 66px; }
.st-info { height: 84px; padding-top: 2px; }
.st-tools { height: 64px; padding-top: 14px; }

.nav { width: 396px; flex: none; background: #f0f0f0; padding-left: 6px; display: flex; flex-direction: column; }
.nav-head { height: 37px; padding: 0 16px 0 4px; display: flex; align-items: center; justify-content: space-between; font-size: 21px; }
.maxbtn { width: 20px; height: 19px; border: 3px solid #1c1c1c; }
.table { width: 381px; flex: 1; display: flex; flex-direction: column; border: 2px solid #c8c8c8; border-bottom: 0; background: #fafafa; }
.thead { height: 33px; flex: none; padding-left: 6px; line-height: 31px; font-size: 20.500px; background: #f0f0f0; border-bottom: 1px solid #d4d4d4; }
.trow { position: relative; height: 36px; flex: none; display: flex; align-items: center; background: #fafafa; border-bottom: 1px solid #e4e4e4; font-size: 20px; }
.tree1 { padding-left: 32px; }
.tree2 { padding-left: 33px; }
.tree1::before { content: ""; position: absolute; left: 16px; top: 18px; width: 15px; height: 36px; border-left: 1px dotted #888; border-top: 1px dotted #888; border-bottom: 1px dotted #888; }
.tn { margin-left: 3px; }
.chk { width: 30px; height: 30px; border: 1px solid #444; background: #fafafa; display: flex; align-items: center; justify-content: center; position: relative; }
.cube { margin-left: 4px; }
.pn { margin-left: 7px; font: bold 21px "Open Sans", sans-serif; color: #1c1c1c; }
.tfill { flex: 1; background: repeating-linear-gradient(to bottom, #fafafa 0, #fafafa 35px, #e4e4e4 35px, #e4e4e4 36px, #f4f4f4 36px, #f4f4f4 71px, #e4e4e4 71px, #e4e4e4 72px); }

.stage { flex: 1; display: flex; flex-direction: column; min-width: 0; }
.tabbar { height: 41px; flex: none; background: #f0f0f0; border-bottom: 2px solid #006f98; padding-left: 1px; }
.tab { width: 199px; height: 40px; background: #00608a; color: #fff; display: flex; align-items: center; padding-left: 6px; gap: 5px; font: 21px "Open Sans", sans-serif; }
.tabx { color: #6f9db4; font-size: 28px; line-height: 1; margin-left: 6px; }
.canvas { position: relative; flex: 1; background: linear-gradient(to bottom, #b9babc 0%, #d4d6d8 60%, #e8e9eb 100%); }
.sketch { position: absolute; left: 0; top: 0; width: 2567px; height: 1372px; }
.dim path { fill: none; stroke: #1414e0; stroke-width: 1.3; }
.dim .dimw { stroke-width: 2; }
.dt { font: 38px "Liberation Sans", sans-serif; fill: #4a4ae0; }
.dtv { fill: #6f78d8; }
.csys { fill: #a3bbd0; stroke: #1a9bee; stroke-width: 2; }
.link { fill: none; stroke: #7a86e8; stroke-width: 1.2; }
.ax-b { fill: none; stroke: #1414e0; stroke-width: 2; }
.ax-g { stroke: #2e8b2e; stroke-width: 2; }
.ax-r { stroke: #d03a2a; stroke-width: 2; }
.axl { font: 12px "Liberation Sans", sans-serif; fill: #1414e0; }
.axl.red { fill: #d03a2a; }
.dots { fill: none; stroke: #1414e0; stroke-width: 2; stroke-dasharray: 2 3; }
.corner { fill: none; stroke: #1414e0; stroke-width: 2.5; }
.sk { fill: none; stroke: #111; stroke-width: 2; }
.pts { fill: #050505; }

/* dialog */
.dialog { position: absolute; left: 1211px; top: 110px; width: 1245px; height: 959px; background: #dcdcdc; border: 1px solid #c8c8c8; display: flex; flex-direction: column; }
.dlg-title { height: 36px; flex: none; background: #005f87; color: #fff; display: flex; align-items: center; padding-left: 9px; }
.dlg-name { margin-left: 11px; font-size: 26px; line-height: 1; }
.dlg-reset { margin-left: auto; }
.dlg-help { margin-left: 14px; font: bold 21px "Liberation Sans", sans-serif; }
.dlg-close { margin: 0 6px 0 14px; font-size: 28px; line-height: 1; }
.find { height: 70px; flex: none; display: flex; align-items: flex-start; padding: 10px 12px 0 12px; }
.find svg { margin-top: 2px; }
.find-l { margin-left: 4px; margin-top: 9px; font-size: 21px; line-height: 30px; }
.find-input { margin-left: 11px; flex: 1; height: 33px; background: #fff; border: 1px solid #bbb; border-top: 2px solid #777; border-bottom: 2px solid #888; padding: 3px; }
.find-input i { width: 1px; height: 24px; background: #222; }
.dlg-body { height: 773px; flex: none; display: flex; padding: 0 15px 0 16px; gap: 13px; }
.dlist { width: 362px; flex: none; border: 1px solid #cfcfcf; background: #fafafa; padding-top: 2px; display: flex; flex-direction: column; position: relative; }
.dlist::before { content: ""; position: absolute; left: 16px; top: 20px; width: 16px; height: 88px; border-left: 1px dotted #888; }
.ditem { position: relative; height: 36px; flex: none; padding-left: 34px; line-height: 33px; font-size: 21px; border-bottom: 2px solid #ececec; }
.ditem.alt { background: #f8f8f8; }
.ditem::before { content: ""; position: absolute; left: 16px; top: 18px; width: 15px; border-top: 1px dotted #888; }
.ditem.sel { background: linear-gradient(to right, #fafafa 33px, #8bc0d3 33px); border-bottom-color: #eee; }
.dfill { flex: 1; background: repeating-linear-gradient(to bottom, #fafafa 0, #fafafa 34px, #ececec 34px, #ececec 36px, #f5f5f5 36px, #f5f5f5 70px, #ececec 70px, #ececec 72px); }
.dpanel { flex: 1; border: 1px solid #c4c4c4; background: #dcdcdc; display: flex; flex-direction: column; }
.sect { flex: none; background: #f0f0f0; border-bottom: 2px solid #aaa; padding: 0 15px 0 14px; }
.s-a { height: 311px; margin-bottom: 2px; }
.s-b { height: 92px; margin-bottom: 2px; }
.s-c { height: 232px; }
.s-c .frow { height: 35.500px; }
.shead { height: 36px; display: flex; align-items: center; font-size: 26px; line-height: 1; color: #00708f; }
.tri { width: 0; height: 0; border-left: 8px solid transparent; border-right: 8px solid transparent; border-top: 13px solid #00607f; margin-right: 9px; margin-left: -3px; }
.s-a .shead + .frow { margin-top: 9px; }
.frow { height: 36px; display: flex; align-items: center; font-size: 21px; line-height: 1; white-space: nowrap; position: relative; }
.mt5 { margin-top: 5px; }
.cb { width: 24px; height: 26px; flex: none; margin-right: 5px; border: 1px solid #777; border-radius: 6px; background: #f0f0f0; display: flex; align-items: center; justify-content: center; }
.cb.on { background: #0060b8; border-color: #0060b8; }
.select { position: absolute; right: 0; top: 0; width: 162px; height: 36px; background: #fff; border: 1px solid #666; border-bottom-width: 2px; padding: 0 10px 0 4px; display: flex; align-items: center; justify-content: space-between; }
.field { position: absolute; right: 0; top: 1px; width: 98px; height: 34px; background: #fff; border: 1px solid #888; border-bottom-width: 2px; padding: 0 4px 0 0; text-align: right; font: 21px/30px "Liberation Serif", serif; letter-spacing: 1px; white-space: pre; overflow: hidden; color: #333; }
.fleft { text-align: left; padding-left: 15px; padding-right: 0; }
.frow.off { color: #a8a8a8; }
.field.dis { border: 1px solid #c0c0c0; background: #f4f4f4; color: #999; }
.collapse { height: 25px; flex: none; display: flex; justify-content: center; align-items: flex-end; padding-bottom: 5px; }
.collapse i { width: 0; height: 0; border-left: 6px solid transparent; border-right: 6px solid transparent; border-bottom: 7px solid #1c1c1c; }
.dlg-foot { flex: 1; margin: 0 5px; border-top: 1px solid #bcbcbc; display: flex; justify-content: flex-end; align-items: flex-start; padding: 7px 9px 0 0; gap: 5px; }
.btn { width: 72px; height: 35px; padding: 0; background: #e2e2e2; border: 1px solid #00607f; color: #00708f; font: 21px/1 "Noto Sans CJK SC", sans-serif; }
.btn.pri { background: #005f87; color: #fff; }

/* annotation layer */
.notes { position: absolute; left: 0; top: 0; width: 3019px; height: 1698px; pointer-events: none; }
.notes ellipse { fill: none; stroke: #f020e8; stroke-width: 6; }
.notes .arrow { fill: #f020e8; }
.notes text { font: 51.400px "Noto Sans CJK SC", sans-serif; fill: #f020e8; }
.mark { position: absolute; right: 2px; bottom: 3px; font: 15px "Liberation Serif", "Noto Sans CJK SC", serif; color: #666; }
```
